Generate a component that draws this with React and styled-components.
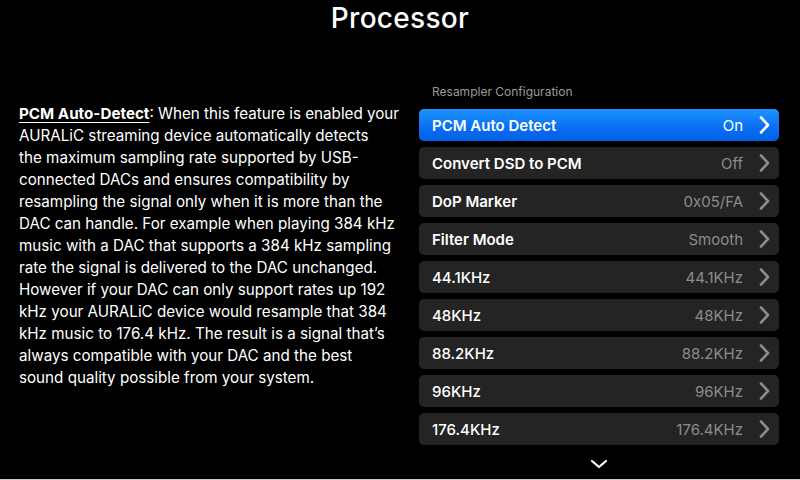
import React from 'react';
import styled, { createGlobalStyle } from 'styled-components';

const GlobalStyle = createGlobalStyle`
	html, body {
		margin: 0;
		padding: 0;
		background: #000;
	}
	body {
		font-family: Inter, "Noto Sans", sans-serif;
		color: #fff;
	}
`;

const Screen = styled.div`
	width: 800px;
	height: 480px;
	box-sizing: border-box;
	background: #000;
	border-bottom: 1px solid #c8c8c8;
	display: flex;
	flex-direction: column;
	overflow: hidden;
`;

const Title = styled.h1`
	margin: 0;
	height: 36px;
	line-height: 36px;
	text-align: center;
	font-size: 28px;
	font-weight: 500;
	letter-spacing: 0.3px;
`;

const Body = styled.div`
	display: flex;
	gap: 10px;
	padding: 0 21px 0 19px;
`;

const Description = styled.p`
	width: 390px;
	margin: 67px 0 0;
	font-size: 15.2px;
	line-height: 22px;
	color: #fff;
	white-space: nowrap;

	u {
		font-weight: 700;
		text-underline-offset: 3px;
	}
`;

const Panel = styled.section`
	flex: 1;
	display: flex;
	flex-direction: column;
	margin-top: 47px;
`;

const PanelHeader = styled.div`
	font-size: 12px;
	color: #9a9a9a;
	padding-left: 13px;
	height: 18px;
	line-height: 18px;
	margin-bottom: 8px;
`;

const List = styled.div`
	display: flex;
	flex-direction: column;
	gap: 6px;
`;

const Row = styled.div`
	height: 32px;
	border-radius: 5px;
	display: flex;
	align-items: center;
	padding: 0 8px 0 13px;
	background: ${(p) =>
		p.$active ? 'linear-gradient(180deg, #1c95ff 0%, #0a6df0 60%, #0060e6 100%)' : '#242424'};
	font-size: 15px;
`;

const Label = styled.span`
	flex: 1;
	font-weight: ${(p) => (p.$bold ? 600 : 500)};
	color: #fff;
`;

const Value = styled.span`
	color: ${(p) => (p.$active ? '#fff' : '#8c8c8c')};
	margin-right: 14px;
`;

const Chevron = ({ color }) => (
	<svg width="14" height="20" viewBox="0 0 14 20">
		<path d="M4 2.5 L11 10 L4 17.5" fill="none" stroke={color} strokeWidth="2.6" strokeLinecap="round" strokeLinejoin="round" />
	</svg>
);

const More = styled.div`
	display: flex;
	justify-content: center;
	margin-top: 14px;
`;

const rows = [
	{ label: 'PCM Auto Detect', value: 'On', bold: true, active: true },
	{ label: 'Convert DSD to PCM', value: 'Off', bold: true },
	{ label: 'DoP Marker', value: '0x05/FA', bold: true },
	{ label: 'Filter Mode', value: 'Smooth', bold: true },
	{ label: '44.1KHz', value: '44.1KHz' },
	{ label: '48KHz', value: '48KHz' },
	{ label: '88.2KHz', value: '88.2KHz' },
	{ label: '96KHz', value: '96KHz' },
	{ label: '176.4KHz', value: '176.4KHz' },
];

const lines = [
	'AURALiC streaming device automatically detects',
	'the maximum sampling rate supported by USB-',
	'connected DACs and ensures compatibility by',
	'resampling the signal only when it is more than the',
	'DAC can handle. For example when playing 384 kHz',
	'music with a DAC that supports a 384 kHz sampling',
	'rate the signal is delivered to the DAC unchanged.',
	'However if your DAC can only support rates up 192',
	'kHz your AURALiC device would resample that 384',
	'kHz music to 176.4 kHz. The result is a signal that’s',
	'always compatible with your DAC and the best',
	'sound quality possible from your system.',
];

export default function App() {
	return (
		<Screen>
			<GlobalStyle />
			<Title>Processor</Title>
			<Body>
				<Description>
					<u>PCM Auto-Detect</u>: When this feature is enabled your
					{lines.map((l) => (
						<React.Fragment key={l}>
							<br />
							{l}
						</React.Fragment>
					))}
				</Description>
				<Panel>
					<PanelHeader>Resampler Configuration</PanelHeader>
					<List>
						{rows.map((r) => (
							<Row key={r.label} $active={r.active}>
								<Label $bold={r.bold}>{r.label}</Label>
								<Value $active={r.active}>{r.value}</Value>
								<Chevron color={r.active ? '#fff' : '#8c8c8c'} />
							</Row>
						))}
					</List>
					<More>
						<svg width="18" height="10" viewBox="0 0 18 10">
							<path d="M2 2 L9 8 L16 2" fill="none" stroke="#fff" strokeWidth="2.2" strokeLinecap="round" strokeLinejoin="round" />
						</svg>
					</More>
				</Panel>
			</Body>
		</Screen>
	);
}
